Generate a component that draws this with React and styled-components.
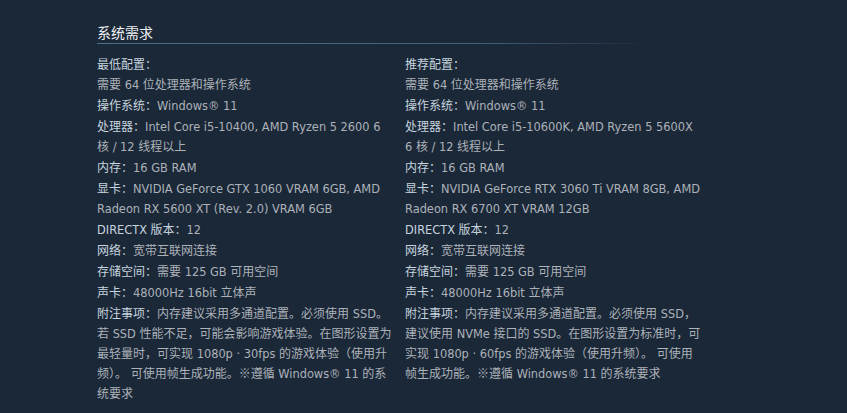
import styled, { createGlobalStyle } from "styled-components";

const GlobalStyle = createGlobalStyle`
  html, body {
    margin: 0;
    padding: 0;
    background: #1b2838;
  }
  body {
    font-family: "Noto Sans CJK SC", sans-serif;
    height: 413px;
    overflow: hidden;
  }
`;

const Wrapper = styled.section`
  padding: 22px 0 0 97px;
  width: 606px;
`;

const Title = styled.h2`
  margin: 0;
  width: 550px;
  font-size: 14px;
  font-weight: normal;
  line-height: 20px;
  color: #eef1f3;
  padding-bottom: 2px;
  background: linear-gradient(to right, #4e6f8a 0%, #41607a 70%, rgba(61, 90, 115, 0.35) 92%, rgba(61, 90, 115, 0) 100%) no-repeat left bottom / 100% 1px;
`;

const Columns = styled.div`
  display: flex;
  gap: 10px;
  margin-top: 10px;
`;

const Col = styled.div`
  width: 298px;
  font-size: 12px;
  line-height: 20px;
  color: #acb2b8;
`;

const ColTitle = styled.strong`
  display: block;
  font-weight: normal;
  color: #c6d4df;
`;

const List = styled.ul`
  list-style: none;
  margin: 0;
  padding: 0;
`;

const Item = styled.li`
  margin-bottom: 1px;
`;

const Label = styled.strong`
  font-weight: normal;
  color: #c6d4df;
`;

// latin runs get their own face, closer to the latin glyphs of the shot
const Latin = styled.span`
  font-family: "DejaVu Sans", "Noto Sans CJK SC", sans-serif;
  font-size: 11.4px;
  line-height: 1;
`;

const CJK_RUN = /([\u3000-\u303f\u3400-\u9fff\uff00-\uffef※]+)/;

const renderText = (str) =>
  str
    .split(CJK_RUN)
    .filter(Boolean)
    .map((part, i) => (CJK_RUN.test(part) ? part : <Latin key={i}>{part}</Latin>));

const minimum = [
  [null, "需要 64 位处理器和操作系统"],
  ["操作系统", "Windows® 11"],
  ["处理器", "Intel Core i5-10400, AMD Ryzen 5 2600 6 核 / 12 线程以上"],
  ["内存", "16 GB RAM"],
  ["显卡", "NVIDIA GeForce GTX 1060 VRAM 6GB, AMD Radeon RX 5600 XT (Rev. 2.0) VRAM 6GB"],
  ["DIRECTX 版本", "12"],
  ["网络", "宽带互联网连接"],
  ["存储空间", "需要 125 GB 可用空间"],
  ["声卡", "48000Hz 16bit 立体声"],
  ["附注事项", "内存建议采用多通道配置。必须使用 SSD。若 SSD 性能不足，可能会影响游戏体验。在图形设置为最轻量时，可实现 1080p · 30fps 的游戏体验（使用升频）。 可使用帧生成功能。※遵循 Windows® 11 的系统要求"],
];

const recommended = [
  [null, "需要 64 位处理器和操作系统"],
  ["操作系统", "Windows® 11"],
  ["处理器", "Intel Core i5-10600K, AMD Ryzen 5 5600X 6 核 / 12 线程以上"],
  ["内存", "16 GB RAM"],
  ["显卡", "NVIDIA GeForce RTX 3060 Ti VRAM 8GB, AMD Radeon RX 6700 XT VRAM 12GB"],
  ["DIRECTX 版本", "12"],
  ["网络", "宽带互联网连接"],
  ["存储空间", "需要 125 GB 可用空间"],
  ["声卡", "48000Hz 16bit 立体声"],
  ["附注事项", "内存建议采用多通道配置。必须使用 SSD，建议使用 NVMe 接口的 SSD。在图形设置为标准时，可实现 1080p · 60fps 的游戏体验（使用升频）。 可使用帧生成功能。※遵循 Windows® 11 的系统要求"],
];

const ReqColumn = ({ title, rows }) => (
  <Col>
    <ColTitle>{title}：</ColTitle>
    <List>
      {rows.map(([label, value], i) => (
        <Item key={i}>
          {label && <Label>{renderText(label)}：</Label>}
          {renderText(value)}
        </Item>
      ))}
    </List>
  </Col>
);

export default function App() {
  return (
    <>
      <GlobalStyle />
      <Wrapper>
        <Title>系统需求</Title>
        <Columns>
          <ReqColumn title="最低配置" rows={minimum} />
          <ReqColumn title="推荐配置" rows={recommended} />
        </Columns>
      </Wrapper>
    </>
  );
}
